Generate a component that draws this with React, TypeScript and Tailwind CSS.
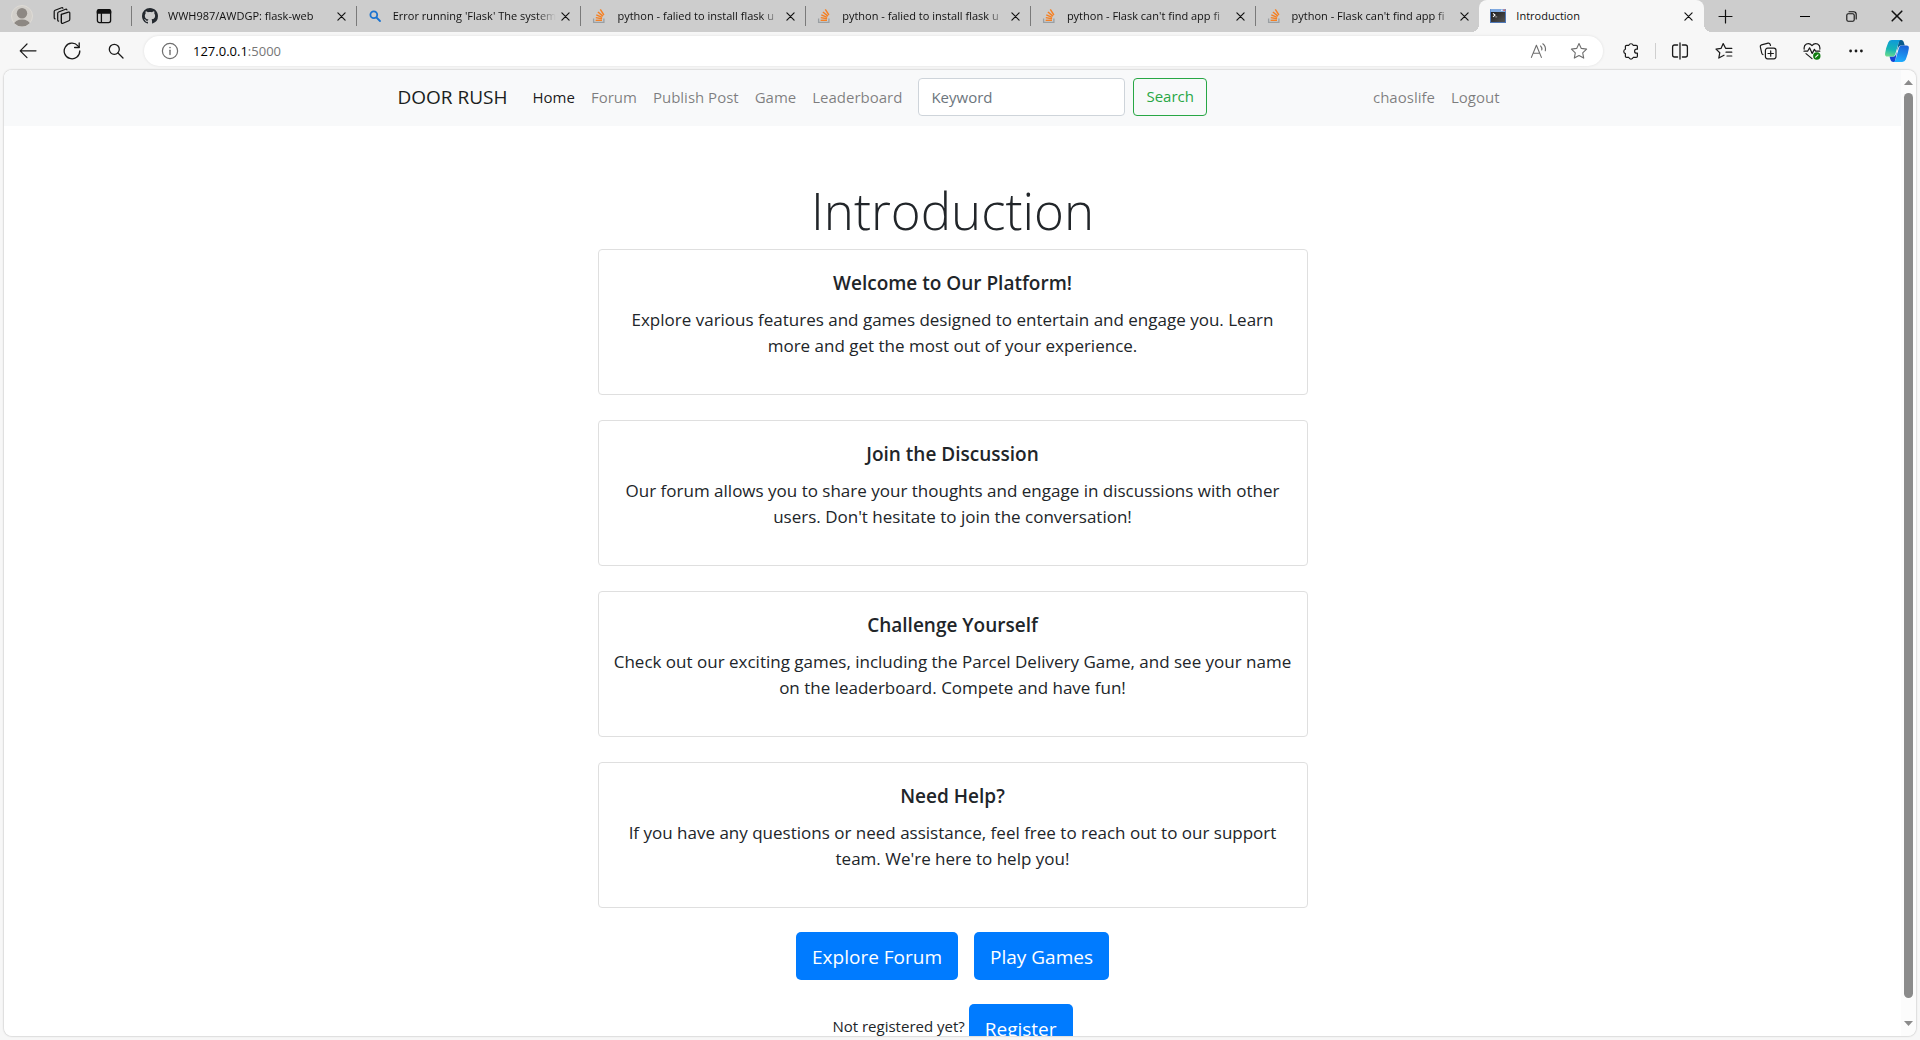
import React from 'react';
import { VscGithubInverted } from 'react-icons/vsc';

const stroke = {
  fill: 'none',
  stroke: 'currentColor',
  strokeLinecap: 'round' as const,
  strokeLinejoin: 'round' as const,
};

function CloseIcon({ size = 9 }: { size?: number }) {
  return (
    <svg width={size} height={size} viewBox="0 0 10 10" {...stroke} strokeWidth="1.3">
      <path d="M1 1l8 8M9 1l-8 8" />
    </svg>
  );
}

function StackIcon() {
  return (
    <svg width="16" height="16" viewBox="0 0 16 16" fill="none" strokeWidth="1.3">
      <path d="M2.6 10.5V14.4H12.9V10.5" stroke="#9a9fa3" />
      <g stroke="#f48024" strokeWidth="1.4">
        <path d="M4.6 12.3h6.4" />
        <path d="M4.8 9.6l6.3 1.1" />
        <path d="M5.3 6.8l5.9 2.6" />
        <path d="M6.9 4l5 4.1" />
        <path d="M9.3 1.4l3.6 5.6" />
      </g>
    </svg>
  );
}

function BlueSearchIcon() {
  return (
    <svg width="16" height="16" viewBox="0 0 16 16" {...stroke} stroke="#1a73d0" strokeWidth="1.8">
      <circle cx="6.8" cy="6.8" r="3.4" />
      <path d="M9.5 9.5l3.5 3.5" />
    </svg>
  );
}

function TerminalIcon() {
  return (
    <svg width="16" height="16" viewBox="0 0 16 16">
      <defs>
        <linearGradient id="term" x1="0" y1="0" x2="1" y2="1">
          <stop offset="0" stopColor="#1c1c1c" />
          <stop offset="1" stopColor="#555" />
        </linearGradient>
      </defs>
      <rect x="0" y="1" width="16" height="14" fill="#4f78b8" />
      <rect x="0.5" y="1" width="15" height="3" fill="#7fa9e0" />
      <rect x="11" y="1.6" width="1.6" height="1.4" fill="#dbe8fa" />
      <rect x="13.4" y="1.4" width="1.8" height="1.6" fill="#e2625c" />
      <rect x="1" y="4" width="14" height="10" fill="url(#term)" />
      <path d="M3 5.4l2 1.7-2 1.7" fill="none" stroke="#fff" strokeWidth="1.1" />
      <path d="M5.2 8.9h2" stroke="#bbb" strokeWidth="0.8" />
    </svg>
  );
}

function ProfileIcon() {
  return (
    <svg width="22" height="22" viewBox="0 0 22 22">
      <defs>
        <clipPath id="avatar">
          <circle cx="11" cy="11" r="10.5" />
        </clipPath>
      </defs>
      <circle cx="11" cy="11" r="10.5" fill="#d2cfca" stroke="#dedbd6" />
      <g clipPath="url(#avatar)" fill="#8d8883">
        <circle cx="11" cy="8.2" r="5.2" />
        <ellipse cx="11" cy="19.6" rx="8" ry="5" />
      </g>
    </svg>
  );
}

function WorkspacesIcon() {
  return (
    <svg width="18" height="18" viewBox="0 0 18 18" {...stroke} strokeWidth="1.2">
      <path d="M8.4 7.4l7.1-2.3q1.3-.4 1.3 .9v6.3q0 1-.9 1.4l-5.9 2.6q-1.3 .5-1.6-.7z" />
      <path d="M5.6 14.2q-.9-.2-.9-1.3V6.4q0-1 .9-1.4l7-2.7q1-.3 1.3 .6" />
      <path d="M2.1 11.9q-.9-.2-.9-1.2V4.6q0-1 .9-1.4L8.6 .8q1-.3 1.3 .5" />
      <path d="M8.4 7.4v7.9" />
    </svg>
  );
}

function TabMenuIcon() {
  return (
    <svg width="16" height="16" viewBox="0 0 16 16" {...stroke} strokeWidth="1.3">
      <rect x="1.4" y="1.6" width="13.2" height="13" rx="2" />
      <path d="M1.4 5V3.4q0-1.8 2-1.8h9.2q2 0 2 1.8V5z" fill="currentColor" />
      <path d="M5.4 5v9.4" />
    </svg>
  );
}

function BackIcon() {
  return (
    <svg width="18" height="18" viewBox="0 0 18 18" {...stroke} strokeWidth="1.2">
      <path d="M17 8.8H1.4M8 2L1.2 8.8 8 15.6" />
    </svg>
  );
}

function ReloadIcon() {
  return (
    <svg width="18" height="18" viewBox="0 0 18 18" {...stroke} strokeWidth="1.3">
      <path d="M16.8 9A7.8 7.8 0 1 1 14.9 3.9L16 5.2" />
      <path d="M16.2 1v4.5h-4.6" />
    </svg>
  );
}

function SearchIcon() {
  return (
    <svg width="16" height="16" viewBox="0 0 16 16" {...stroke} strokeWidth="1.3">
      <circle cx="6.3" cy="6.3" r="5" />
      <path d="M10 10l5 5" />
    </svg>
  );
}

function InfoIcon() {
  return (
    <svg width="18" height="18" viewBox="0 0 18 18" {...stroke} strokeWidth="1.2">
      <circle cx="9" cy="9" r="7.6" />
      <path d="M9 8.2v4.4" strokeWidth="1.4" />
      <circle cx="9" cy="5.6" r="0.8" fill="currentColor" stroke="none" />
    </svg>
  );
}

function ReadAloudIcon() {
  return (
    <svg width="18" height="18" viewBox="0 0 18 18" {...stroke} strokeWidth="1.1">
      <path d="M1.4 15.4L6.4 3.2l5 12.2M3.1 11.2h6.6" />
      <path d="M10.6 4q1.6 1.6 1.2 4M12.8 1.8q3.4 2.6 2.5 7" />
    </svg>
  );
}

function StarIcon() {
  return (
    <svg width="18" height="18" viewBox="0 0 18 18" {...stroke} strokeWidth="1.1">
      <path d="M9 1.5l2.3 4.9 5.3.7-3.9 3.7 1 5.3L9 13.5l-4.7 2.6 1-5.3L1.4 7.1l5.3-.7z" />
    </svg>
  );
}

function ExtensionsIcon() {
  return (
    <svg width="18" height="18" viewBox="0 0 18 18" {...stroke} strokeWidth="1.2">
      <path d="M4.6 3.4H6.8A2.3 2.3 0 0 1 11.2 3.4H14.2Q15.4 3.4 15.4 4.6V7.2H14.6A2 2 0 0 0 14.6 11.2H15.4V14.2Q15.4 15.4 14.2 15.4H11.2A2.3 2.3 0 0 1 6.8 15.4H4.6Q3.4 15.4 3.4 14.2V11.6A2.3 2.3 0 0 1 3.4 7.2V4.6Q3.4 3.4 4.6 3.4z" />
    </svg>
  );
}

function SplitIcon() {
  return (
    <svg width="18" height="18" viewBox="0 0 18 18" {...stroke} strokeWidth="1.3">
      <path d="M9 1v16M6.6 3H3.6Q1.6 3 1.6 5v8q0 2 2 2h3M11.4 3h3q2 0 2 2v8q0 2-2 2h-3" />
    </svg>
  );
}

function FavoritesIcon() {
  return (
    <svg width="18" height="18" viewBox="0 0 18 18" {...stroke} strokeWidth="1.2">
      <path d="M11 6.4H16.8M11 10.2h5.8M12 14h4.8" />
      <path d="M10.6 6.2L8.2 1.6 6 6.4 1 7.1l3.8 3.6-1 5.4 5.2-2.9" />
    </svg>
  );
}

function CollectionsIcon() {
  return (
    <svg width="18" height="18" viewBox="0 0 18 18" {...stroke} strokeWidth="1.2">
      <rect x="6.4" y="6.2" width="10.6" height="10.6" rx="2.2" />
      <path d="M11.7 8.8v5.4M9 11.5h5.4" />
      <path d="M3.9 12.6Q2.9 12 2.7 11L1.3 4.6q-.3-1.4 1.2-1.8l6.6-1.6q1.5-.3 2 1.1l.4 1.2" />
    </svg>
  );
}

function HealthIcon() {
  return (
    <svg width="18" height="18" viewBox="0 0 18 18" {...stroke} strokeWidth="1.2">
      <path d="M1.2 7.2Q.6 3.6 3.4 2q3.2-1.4 5.6 1.6Q11.4.6 14.6 2q2.8 1.6 2.2 5.2" />
      <path d="M1 9.2h3.6l2-3.4 2.6 5.6 2.2-4 1.2 1.8h4.2" />
      <path d="M3 11.6l6 5" />
      <circle cx="13.8" cy="14" r="3.7" fill="#107c10" stroke="none" />
      <path d="M12.6 15.2l2.4-2.4" stroke="#fff" strokeWidth="1.1" />
    </svg>
  );
}

function MoreIcon() {
  return (
    <svg width="18" height="18" viewBox="0 0 18 18" fill="currentColor">
      <circle cx="3.6" cy="9" r="1.4" />
      <circle cx="9" cy="9" r="1.4" />
      <circle cx="14.4" cy="9" r="1.4" />
    </svg>
  );
}

function CopilotIcon() {
  return (
    <svg width="26" height="24" viewBox="0 0 26 24">
      <defs>
        <linearGradient id="cpA" x1="0.4" y1="0" x2="0.2" y2="1">
          <stop offset="0" stopColor="#0f9bd8" />
          <stop offset="0.55" stopColor="#16b5b5" />
          <stop offset="1" stopColor="#6fdc8c" />
        </linearGradient>
        <linearGradient id="cpB" x1="0.6" y1="0" x2="0.4" y2="1">
          <stop offset="0" stopColor="#1c62d8" />
          <stop offset="0.6" stopColor="#1a8fee" />
          <stop offset="1" stopColor="#1fb0ff" />
        </linearGradient>
      </defs>
      <path d="M15 1h2.2q1.8 0 2.4 1.8l1.2 3.6h-4q-1.6 0-2.2 1.7L13 12z" fill="#0a5a8c" />
      <path d="M11 23H9.2q-1.9 0-2.5-1.8L5.5 17.6h3.8q1.7 0 2.3-1.7L13 12z" fill="#1743d4" />
      <path d="M7.8 1H17q-1.6.2-2.2 2.2L11.2 15.4q-.7 2.2-2.7 2.2H3.6q-3.1 0-2.5-3.4Q2 8.4 4.2 3.4 5.3 1 7.8 1z" fill="url(#cpA)" />
      <path d="M18.2 23H9.4q1.5-.2 2.1-2.2l3.5-12q.7-2.4 2.7-2.4h4.7q3 0 2.4 3.4-.9 5.8-3 10.8-1.1 2.4-3.6 2.4z" fill="url(#cpB)" />
    </svg>
  );
}

type TabInfo = { title: string; icon: React.ReactNode };

const tabs: TabInfo[] = [
  { title: 'WWH987/AWDGP: flask-web', icon: <VscGithubInverted size={16} color="#24292f" /> },
  { title: "Error running 'Flask' The system", icon: <BlueSearchIcon /> },
  { title: 'python - falied to install flask u', icon: <StackIcon /> },
  { title: 'python - falied to install flask u', icon: <StackIcon /> },
  { title: "python - Flask can't find app fi", icon: <StackIcon /> },
  { title: "python - Flask can't find app fi", icon: <StackIcon /> },
];

function Tab({ tab }: { tab: TabInfo }) {
  return (
    <div className="flex h-full min-w-0 flex-1 items-center">
      <span className="h-5 w-px shrink-0 bg-[#7a7a7a]" />
      <button className="flex min-w-0 flex-1 items-center gap-2.5 pl-2.5 text-left">
        <span className="shrink-0">{tab.icon}</span>
        <span className="min-w-0 flex-1 overflow-hidden whitespace-nowrap text-[11px] leading-4 [mask-image:linear-gradient(to_right,black_calc(100%-20px),transparent)]">
          {tab.title}
        </span>
      </button>
      <button aria-label="Close tab" className="flex h-6 w-6 shrink-0 items-center pl-[5px]">
        <CloseIcon />
      </button>
    </div>
  );
}

function TabStrip() {
  return (
    <header className="flex h-8 shrink-0 items-center bg-[#cdcdcd] text-[#111]">
      <div className="flex w-[131px] shrink-0 items-center">
        <button aria-label="Profile" className="flex w-11 justify-center">
          <ProfileIcon />
        </button>
        <button aria-label="Workspaces" className="flex w-9 justify-center">
          <WorkspacesIcon />
        </button>
        <button aria-label="Tab actions menu" className="flex w-12 justify-center">
          <TabMenuIcon />
        </button>
      </div>
      <div className="flex h-full min-w-0 flex-1">
        {tabs.map((tab, i) => (
          <Tab key={i} tab={tab} />
        ))}
        <div className="flex h-full min-w-0 flex-1 items-end">
          <div className="-ml-2 h-2 w-2 shrink-0 bg-[radial-gradient(circle_at_0_0,#cdcdcd_8px,#f7f7f7_8px)]" />
          <div className="flex h-full min-w-0 flex-1 items-center rounded-t-lg bg-[#f7f7f7]">
            <button className="flex min-w-0 flex-1 items-center gap-2.5 pl-[11px] text-left">
              <TerminalIcon />
              <span className="text-[11px] leading-4">Introduction</span>
            </button>
            <button aria-label="Close tab" className="flex h-6 w-8 shrink-0 items-center justify-center">
              <CloseIcon />
            </button>
          </div>
          <div className="-mr-2 h-2 w-2 shrink-0 bg-[radial-gradient(circle_at_100%_0,#cdcdcd_8px,#f7f7f7_8px)]" />
        </div>
      </div>
      <button aria-label="New tab" className="flex w-[42px] shrink-0 justify-center">
        <svg width="15" height="15" viewBox="0 0 15 15" {...stroke} strokeWidth="1.2">
          <path d="M7.5 1v13M1 7.5h13" />
        </svg>
      </button>
      <div className="ml-9 flex shrink-0">
        <button aria-label="Minimize" className="flex w-[46px] items-center justify-center">
          <span className="h-px w-2.5 bg-black" />
        </button>
        <button aria-label="Restore" className="flex w-[46px] items-center justify-center">
          <svg width="11" height="11" viewBox="0 0 11 11" {...stroke} strokeWidth="1.1">
            <rect x="0.8" y="2.8" width="7.4" height="7.4" rx="1.4" />
            <path d="M3 .8h4.6q2.6 0 2.6 2.6V8" />
          </svg>
        </button>
        <button aria-label="Close window" className="flex w-[46px] items-center justify-center">
          <CloseIcon size={12} />
        </button>
      </div>
    </header>
  );
}

function ToolButton({ label, children }: { label: string; children: React.ReactNode }) {
  return (
    <button aria-label={label} className="flex h-8 w-11 shrink-0 items-center justify-center">
      {children}
    </button>
  );
}

function Toolbar() {
  return (
    <div className="flex h-[37px] shrink-0 items-center pl-1.5 text-[#1a1a1a]">
      <ToolButton label="Back"><BackIcon /></ToolButton>
      <ToolButton label="Refresh"><ReloadIcon /></ToolButton>
      <ToolButton label="Search"><SearchIcon /></ToolButton>
      <div className="ml-1.5 flex h-[30px] min-w-0 flex-1 items-center rounded-full bg-white pl-[17px] pr-1 text-[#6e6e6e] shadow-[0_0_3px_rgba(0,0,0,0.10)]">
        <InfoIcon />
        <a href="#url" className="ml-3.5 flex-1 text-[13px] leading-5 text-[#767676]">
          <span className="text-black">127.0.0.1</span>:5000
        </a>
        <button aria-label="Read aloud" className="flex w-10 justify-center"><ReadAloudIcon /></button>
        <button aria-label="Add to favorites" className="flex w-10 justify-center"><StarIcon /></button>
      </div>
      <div className="-mr-0.5 ml-1.5 flex shrink-0 items-center">
        <ToolButton label="Extensions"><ExtensionsIcon /></ToolButton>
        <span className="mx-0.5 h-4 w-px bg-[#cfcfcf]" />
        <ToolButton label="Split screen"><SplitIcon /></ToolButton>
        <ToolButton label="Favorites"><FavoritesIcon /></ToolButton>
        <ToolButton label="Collections"><CollectionsIcon /></ToolButton>
        <ToolButton label="Browser essentials"><HealthIcon /></ToolButton>
        <ToolButton label="Settings and more"><MoreIcon /></ToolButton>
        <button aria-label="Copilot" className="flex h-8 w-11 shrink-0 items-center pl-1.5">
          <CopilotIcon />
        </button>
      </div>
    </div>
  );
}

const navLinks = ['Home', 'Forum', 'Publish Post', 'Game', 'Leaderboard'];

function SiteNav() {
  return (
    <nav className="bg-[#f8f9fa] pb-2.5 pt-2">
      <div className="mx-auto flex max-w-[1140px] items-center px-[15px] text-[15px] leading-6">
        <a href="#home" className="mr-[17px] text-[19px] leading-[30px] text-[#1a1d20]">DOOR RUSH</a>
        {navLinks.map((label) => (
          <a key={label} href="#nav" className={label === 'Home' ? 'px-2 text-black/90' : 'px-2 text-black/50'}>
            {label}
          </a>
        ))}
        <form className="ml-2 flex gap-2" onSubmit={(e) => e.preventDefault()}>
          <input
            aria-label="Keyword"
            placeholder="Keyword"
            className="h-[38px] w-[207px] rounded border border-[#ced4da] bg-white px-3 placeholder:text-[#6c757d]"
          />
          <button className="h-[38px] rounded border border-[#28a745] px-3 pb-0.5 text-[#28a745]">Search</button>
        </form>
        <div className="ml-auto flex text-black/50">
          <a href="#user" className="px-2">chaoslife</a>
          <a href="#logout" className="px-2">Logout</a>
        </div>
      </div>
    </nav>
  );
}

const cards = [
  {
    title: 'Welcome to Our Platform!',
    text: 'Explore various features and games designed to entertain and engage you. Learn more and get the most out of your experience.',
  },
  {
    title: 'Join the Discussion',
    text: "Our forum allows you to share your thoughts and engage in discussions with other users. Don't hesitate to join the conversation!",
  },
  {
    title: 'Challenge Yourself',
    text: 'Check out our exciting games, including the Parcel Delivery Game, and see your name on the leaderboard. Compete and have fun!',
  },
  {
    title: 'Need Help?',
    text: "If you have any questions or need assistance, feel free to reach out to our support team. We're here to help you!",
  },
];

function BlueLink({ children }: { children: React.ReactNode }) {
  return (
    <a href="#go" className="rounded-[5px] bg-[#007bff] px-4 pb-2 pt-2.5 text-[19px] leading-[30px] text-white">
      {children}
    </a>
  );
}

function Page() {
  return (
    <div className="min-w-0 flex-1 overflow-hidden bg-white">
      <SiteNav />
      <main className="mx-auto max-w-[710px] pt-[50px] text-center text-[#212529]">
        <h1 className="mb-1 text-[51px] font-light leading-[69px]">Introduction</h1>
        <div className="grid gap-[25px]">
          {cards.map((card) => (
            <section key={card.title} className="rounded border border-[#dfdfdf] px-3 pb-[35px] pt-[21px]">
              <h2 className="mb-3 text-[19px] font-semibold leading-6">{card.title}</h2>
              <p className="text-[17px] leading-[26px]">{card.text}</p>
            </section>
          ))}
        </div>
        <div className="mt-6 flex justify-center gap-4">
          <BlueLink>Explore Forum</BlueLink>
          <BlueLink>Play Games</BlueLink>
        </div>
        <p className="mt-6 flex items-center justify-center gap-1 text-[15px]">
          <span className="pb-1">Not registered yet?</span>
          <BlueLink>Register</BlueLink>
        </p>
      </main>
    </div>
  );
}

function Scrollbar() {
  return (
    <div className="flex w-[15px] shrink-0 flex-col items-center bg-[#fcfcfc] pb-2.5 pt-2.5">
      <svg width="9" height="5" viewBox="0 0 9 5" fill="#8b8b8b"><path d="M4.5 0L9 5H0z" /></svg>
      <div className="mb-[23px] mt-2 w-[9px] flex-1 rounded-full bg-[#8b8b8b]" />
      <svg width="9" height="5" viewBox="0 0 9 5" fill="#8b8b8b"><path d="M4.5 5L0 0h9z" /></svg>
    </div>
  );
}

export default function App() {
  return (
    <div className="flex h-screen flex-col overflow-hidden bg-[#f7f7f7] font-['Open_Sans',sans-serif]">
      <TabStrip />
      <Toolbar />
      <div className="mx-1 mb-1 mt-px flex min-h-0 flex-1 overflow-hidden rounded-lg shadow-[0_0_2px_rgba(0,0,0,0.35)]">
        <Page />
        <Scrollbar />
      </div>
    </div>
  );
}
